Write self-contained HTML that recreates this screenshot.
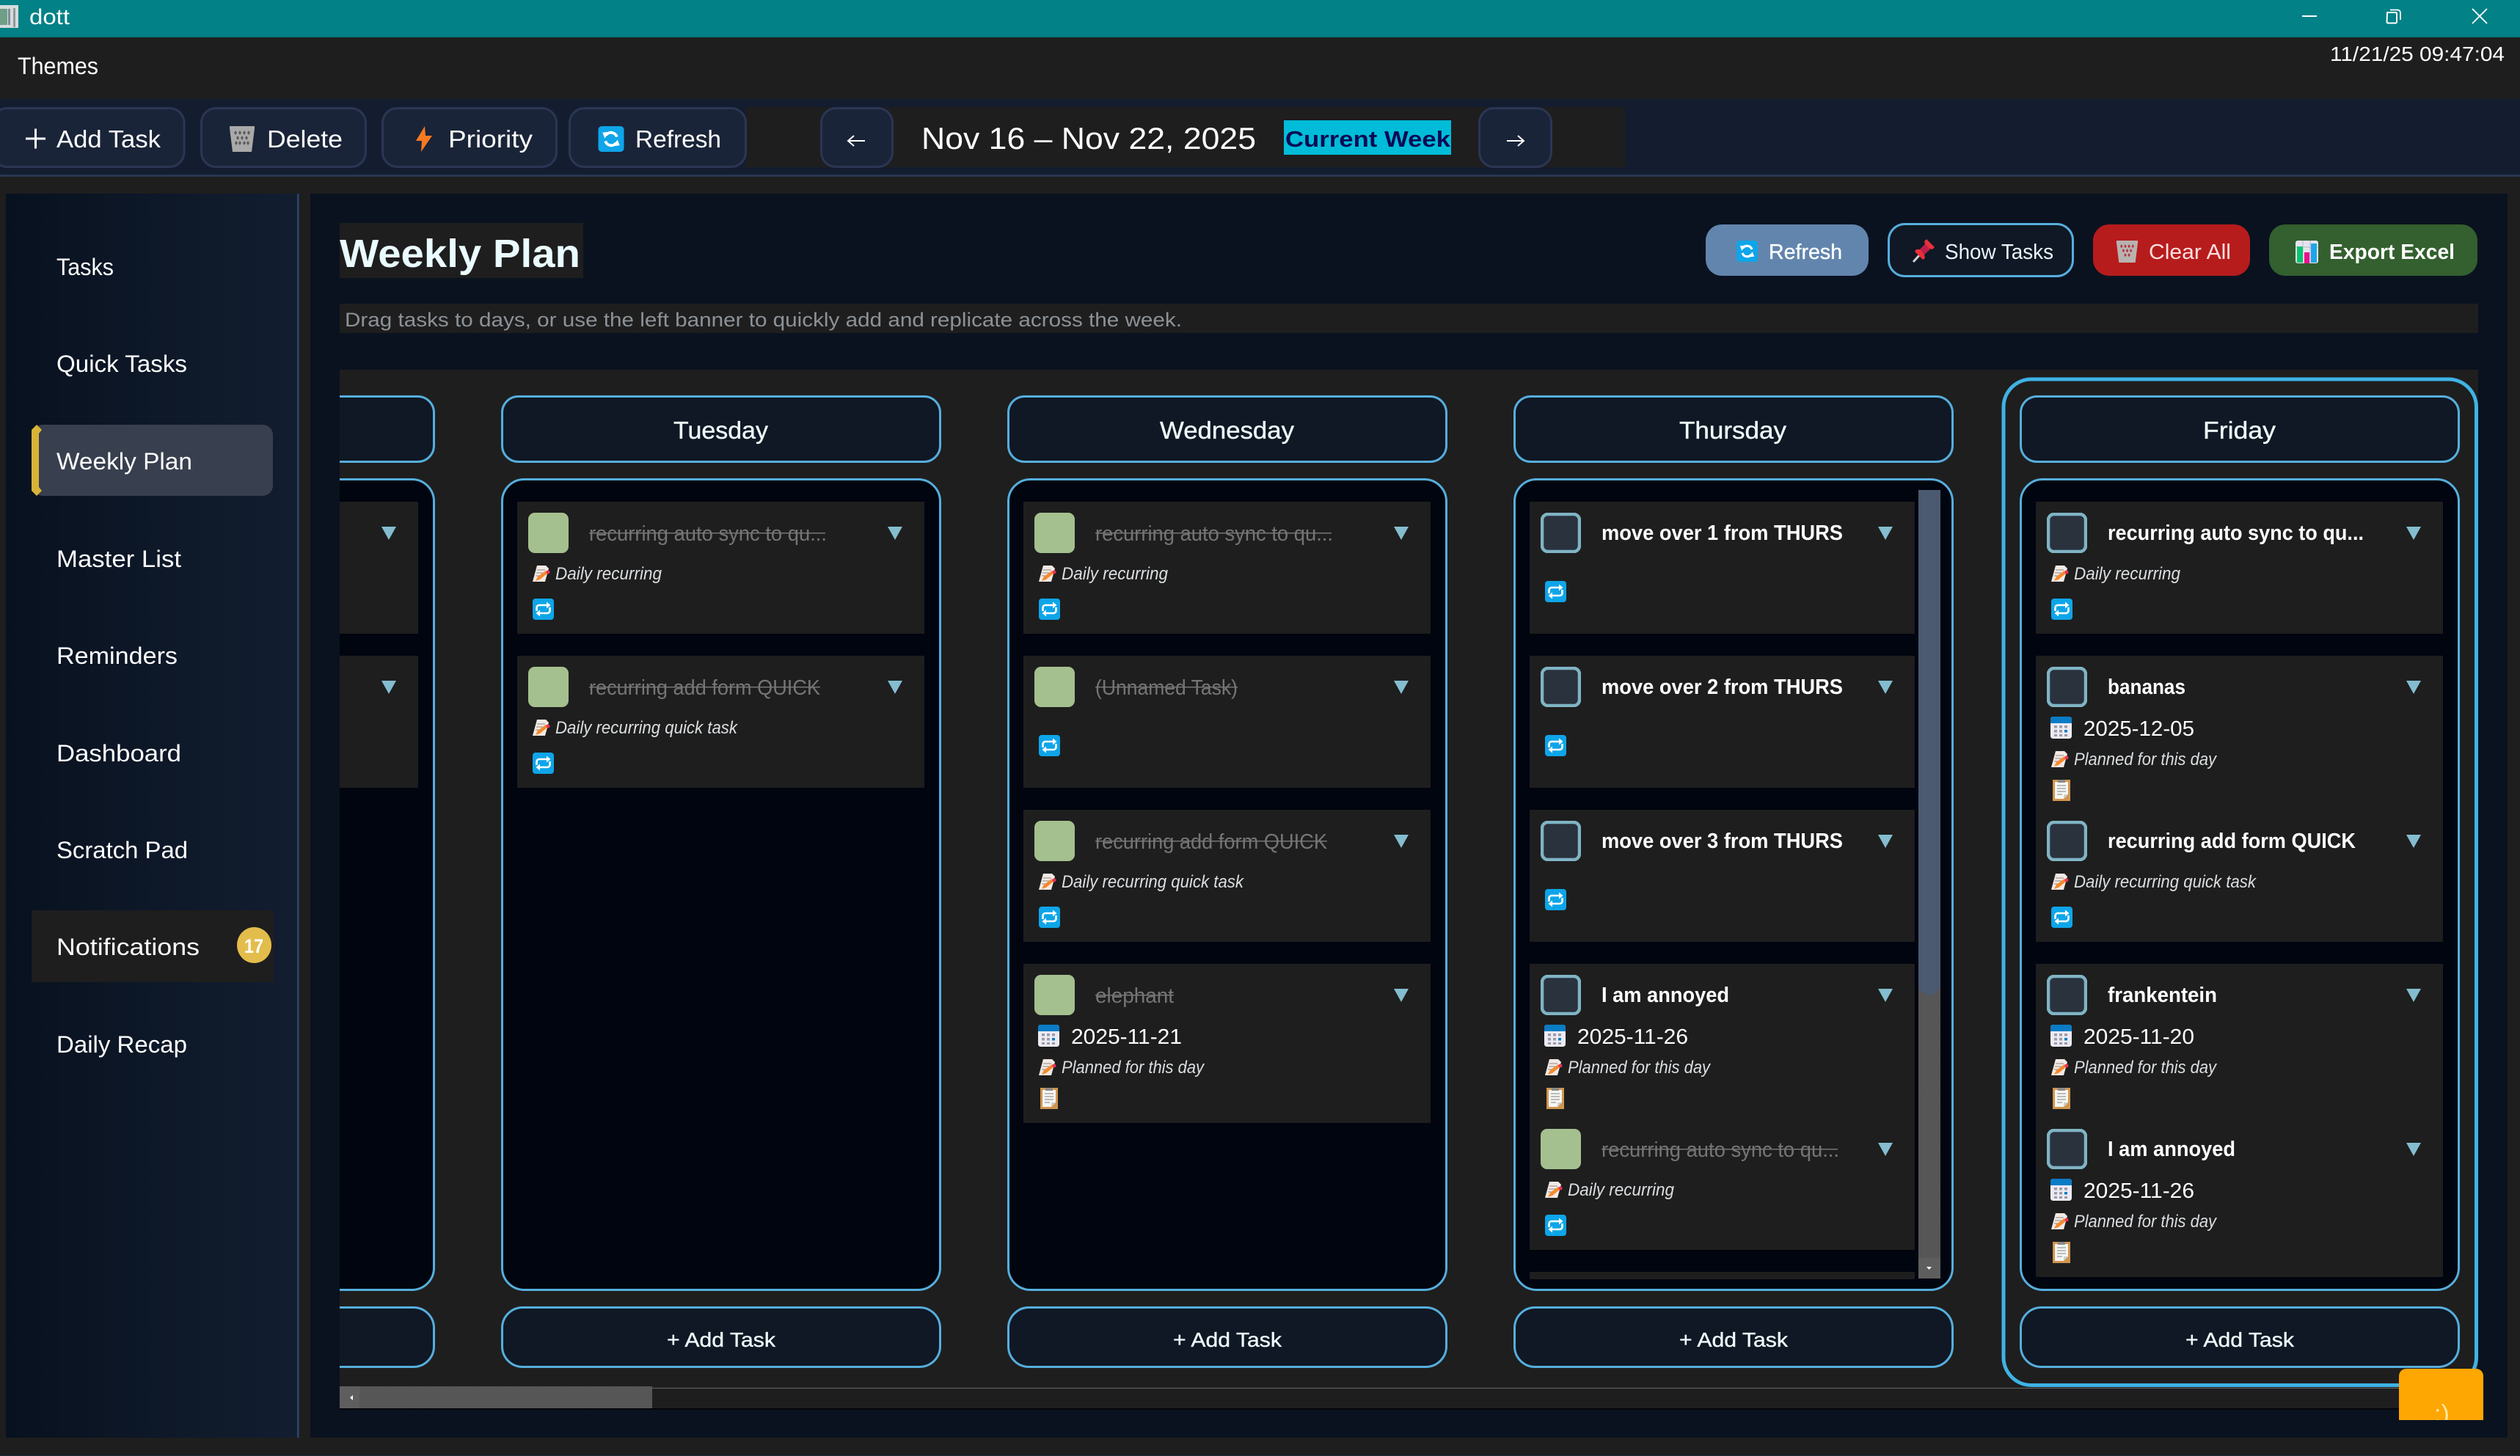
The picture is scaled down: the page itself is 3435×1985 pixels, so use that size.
<!DOCTYPE html>
<html lang="en"><head><meta charset="utf-8"><title>dott</title>
<style>
html,body{margin:0;padding:0;background:#1e1e1e;width:3435px;height:1985px;overflow:hidden}
svg{display:block;font-family:"Liberation Sans",sans-serif}
text{fill:#fff}
.b{font-weight:bold}
.i{font-style:italic;fill:#dcdfe2}
.m{stroke:#fff;stroke-width:.35}
.s{fill:#757575}
</style></head><body>
<svg xmlns="http://www.w3.org/2000/svg" width="3435" height="1985" viewBox="0 0 3435 1985">
<defs>
<linearGradient id="side" x1="0" x2="1" y1="0" y2="0"><stop offset="0" stop-color="#08111f"/><stop offset="1" stop-color="#121e30"/></linearGradient>
<pattern id="dith" width="2" height="2" patternUnits="userSpaceOnUse"><rect width="2" height="2" fill="#303030"/><rect width="1" height="1" fill="#7c7c7c"/><rect x="1" y="1" width="1" height="1" fill="#7c7c7c"/></pattern>
<clipPath id="boardclip"><rect x="463" y="504" width="2915" height="1416"/></clipPath>
<clipPath id="smile"><path d="M3270 1876a10 10 0 0 1 10-10h95a10 10 0 0 1 10 10v60h-115z"/></clipPath>

<symbol id="cd" width="55" height="55" viewBox="0 0 55 55"><rect width="55" height="55" rx="9" fill="#a5c08f"/></symbol>
<symbol id="cu" width="55" height="55" viewBox="0 0 55 55"><rect x="2" y="2" width="51" height="51" rx="8" fill="#2a323e" stroke="#7fb4c4" stroke-width="4.500"/></symbol>
<symbol id="tri" width="20" height="18" viewBox="0 0 20 18"><path d="M0 0H20L10 18z" fill="#84bdcf"/></symbol>
<symbol id="loop" width="29" height="29" viewBox="0 0 29 29"><rect width="29" height="29" rx="4" fill="#0ea5e9"/><path d="M5.500 17V12.500a3.500 3.500 0 0 1 3.500-3.500H20M23.500 12V16.500a3.500 3.500 0 0 1-3.500 3.500H9" fill="none" stroke="#fff" stroke-width="2.600"/><path d="M19 4.500l5.500 4.500-5.500 4.500zM10 15.500l-5.500 4.500 5.500 4.500z" fill="#fff"/></symbol>
<symbol id="note" width="24" height="22" viewBox="0 0 24 22"><path d="M6 0H18L22 4 17 22H0z" fill="#f3e9e4"/><path d="M6 6H17M5 10H14M4 14H10" stroke="#a09a9a" stroke-width="1.300"/><path d="M4 21L7 15 18 7 21 10 10 19z" fill="#f58a2c"/><circle cx="21" cy="9" r="2.500" fill="#e9305c"/></symbol>
<symbol id="cal" width="29" height="30" viewBox="0 0 29 30"><rect width="29" height="30" rx="3.500" fill="#ecebf3"/><path d="M0 9V3.500A3.500 3.500 0 0 1 3.500 0H25.500A3.500 3.500 0 0 1 29 3.500V9z" fill="#0a7cc6"/><g fill="#9d9aa8"><rect x="5" y="12" width="4" height="3.500"/><rect x="12" y="12" width="4" height="3.500"/><rect x="19" y="12" width="4" height="3.500"/><rect x="5" y="18" width="4" height="3.500"/><rect x="12" y="18" width="4" height="3.500"/><rect x="5" y="24" width="4" height="3"/><rect x="12" y="24" width="4" height="3"/><rect x="19" y="24" width="4" height="3"/></g><rect x="19" y="18" width="4" height="3.500" fill="#0a7cc6"/></symbol>
<symbol id="clip" width="24" height="29" viewBox="0 0 24 29"><rect width="24" height="29" y="0" fill="#d09650"/><path d="M3 3H21V20L15 26H3z" fill="#f6f6f4"/><path d="M15 26V20H21z" fill="#cfcfcf"/><rect x="7" y="0" width="10" height="4" fill="#8b8b8b"/><path d="M6 8H18M6 12H18M6 16H18M6 20H13" stroke="#9a9a9a" stroke-width="1.200"/></symbol>
<symbol id="trash" viewBox="0 0 34 35"><path d="M0 0H34V3L30 35H4L0 3z" fill="#a9a9a9"/><g fill="#5a5a5a"><path d="M8 6l2 3-2 3-2-3zM14 6l2 3-2 3-2-3zM20 6l2 3-2 3-2-3zM26 6l2 3-2 3-2-3zM11 13l2 3-2 3-2-3zM17 13l2 3-2 3-2-3zM23 13l2 3-2 3-2-3zM14 20l2 3-2 3-2-3zM20 20l2 3-2 3-2-3zM9 20l2 3-2 3-2-3zM25 20l2 3-2 3-2-3z"/></g></symbol>
<symbol id="trashr" viewBox="0 0 34 35"><path d="M0 0H34V3L30 35H4L0 3z" fill="#b9b2b0"/><g fill="#b4303a"><path d="M8 6l2 3-2 3-2-3zM14 6l2 3-2 3-2-3zM20 6l2 3-2 3-2-3zM26 6l2 3-2 3-2-3zM11 13l2 3-2 3-2-3zM17 13l2 3-2 3-2-3zM23 13l2 3-2 3-2-3zM14 20l2 3-2 3-2-3zM20 20l2 3-2 3-2-3z"/></g></symbol>
<symbol id="bolt" width="22" height="35" viewBox="0 0 22 35"><path d="M12 0L0 20H8L7 35 22 13H13z" fill="#f97a22"/></symbol>
<symbol id="ref" viewBox="0 0 36 36"><rect width="36" height="36" rx="5" fill="#0ea5e9"/><path d="M26 15A8.500 8.500 0 0 0 11 12.500M10 21A8.500 8.500 0 0 0 25 23.500" fill="none" stroke="#fff" stroke-width="4"/><path d="M6 9L16 8 9 17zM30 27L20 28 27 19z" fill="#fff"/></symbol>
<symbol id="pin" width="30" height="32" viewBox="0 0 30 32"><path d="M1 31L11 20" stroke="#cfcfcf" stroke-width="3"/><path d="M19 0L30 11 27 14 23 13 16 21 17 26 14 28 3 17 5 14 10 14 17 7 16 3z" fill="#e8303a"/><path d="M10 14L17 7 24 14 16 21z" fill="#bc1f4a"/></symbol>
<symbol id="chart" width="31" height="31" viewBox="0 0 31 31"><rect width="31" height="31" rx="3" fill="#e4e4ee"/><path d="M10 0V31M20 0V31M0 9H31" stroke="#b9b9c6"/><rect x="2" y="8" width="8" height="22" fill="#08c470"/><rect x="12" y="16" width="7" height="15" fill="#ec0e8c"/><rect x="21" y="4" width="8" height="26" fill="#1ea5e9"/></symbol>
</defs>

<!-- base -->
<rect width="3435" height="1985" fill="#1e1e1e"/>
<rect y="1984" width="3435" height="1" fill="#1c2c3a"/>

<!-- title bar -->
<rect width="3435" height="51" fill="#028186"/>
<rect y="50" width="3435" height="1" fill="#0e6f70"/>
<rect y="7" width="25" height="31" fill="#d6dcdc"/><rect y="12" width="10" height="22" fill="#6f9f86"/><rect x="11" y="12" width="3" height="22" fill="#7d8d99"/><rect x="18" y="11" width="3" height="26" fill="#8f9a9a"/>
<text x="40" y="33" font-size="30" textLength="55" lengthAdjust="spacingAndGlyphs">dott</text>
<rect x="3138" y="21" width="20" height="2" fill="#fff"/>
<path d="M3254 17.500h11.500a1.500 1.500 0 0 1 1.500 1.500v11.500a1.500 1.500 0 0 1-1.500 1.500H3255a1.500 1.500 0 0 1-1.500-1.500z" transform="translate(0,-.5)" fill="none" stroke="#fff" stroke-width="2"/>
<path d="M3258 13.500h10a4 4 0 0 1 4 4V27" fill="none" stroke="#fff" stroke-width="1.800"/>
<path d="M3370 12L3390 32M3390 12L3370 32" stroke="#fff" stroke-width="1.800"/>

<!-- menu bar -->
<text x="24" y="101" font-size="32" textLength="110" lengthAdjust="spacingAndGlyphs">Themes</text>
<text x="3176" y="83" font-size="28" textLength="238" lengthAdjust="spacingAndGlyphs">11/21/25 09:47:04</text>

<!-- toolbar -->
<rect y="135" width="3435" height="104" fill="#141d30"/>
<rect y="238" width="3435" height="3" fill="#2a3650"/>
<rect x="1017" y="146" width="1198" height="82" fill="#1e1e1e"/>
<g fill="#1a2438" stroke="#2b3654" stroke-width="3">
<rect x="-10" y="147.500" width="261" height="80" rx="20"/>
<rect x="274.500" y="147.500" width="224" height="80" rx="20"/>
<rect x="521.500" y="147.500" width="237" height="80" rx="20"/>
<rect x="776.500" y="147.500" width="240" height="80" rx="20"/>
<rect x="1119.500" y="147.500" width="97" height="80" rx="20"/>
<rect x="2016.500" y="147.500" width="98" height="80" rx="20"/>
</g>
<path d="M35 189H62M48.500 175.500V202.500" stroke="#fff" stroke-width="3"/>
<text x="77" y="201" font-size="33" textLength="142" lengthAdjust="spacingAndGlyphs">Add Task</text>
<use href="#trash" x="313" y="172" width="34" height="35"/>
<text x="364" y="201" font-size="33" textLength="103" lengthAdjust="spacingAndGlyphs">Delete</text>
<use href="#bolt" x="567" y="172"/>
<text x="611" y="201" font-size="33" textLength="115" lengthAdjust="spacingAndGlyphs">Priority</text>
<use href="#ref" x="815" y="172" width="36" height="35"/>
<text x="866" y="201" font-size="33" textLength="117" lengthAdjust="spacingAndGlyphs">Refresh</text>
<path d="M1179 192H1156M1164 185L1156 192 1164 199" fill="none" stroke="#fff" stroke-width="2"/>
<text x="1256" y="203" font-size="42" textLength="456" lengthAdjust="spacingAndGlyphs">Nov 16 – Nov 22, 2025</text>
<rect x="1750" y="164" width="228" height="47" fill="#00bcd8"/>
<text x="1752" y="200" font-size="31" class="b" style="fill:#0b0a55" textLength="225" lengthAdjust="spacingAndGlyphs">Current Week</text>
<path d="M2054 192H2077M2069 185L2077 192 2069 199" fill="none" stroke="#fff" stroke-width="2"/>

<!-- sidebar -->
<rect x="8" y="264" width="397" height="1696" fill="url(#side)"/>
<rect x="405" y="264" width="2.500" height="1696" fill="#2d4470"/>
<rect x="44" y="579" width="328" height="97" rx="14" fill="#383f4e"/>
<path d="M50 579L57 586 53 591V664L57 669 50 676 43 669V586z" fill="#d9b338"/>
<rect x="43" y="1241" width="330" height="98" fill="#1e1e1e"/>
<ellipse cx="346.500" cy="1288.500" rx="23.500" ry="24.500" fill="#e3bd4c"/>
<text x="333" y="1299" font-size="27" class="b" textLength="26" lengthAdjust="spacingAndGlyphs">17</text>
<g font-size="32" style="fill:#f4f7fb">
<text x="77" y="375" textLength="78" lengthAdjust="spacingAndGlyphs">Tasks</text>
<text x="77" y="507" textLength="178" lengthAdjust="spacingAndGlyphs">Quick Tasks</text>
<text x="77" y="640" textLength="185" lengthAdjust="spacingAndGlyphs">Weekly Plan</text>
<text x="77" y="773" textLength="170" lengthAdjust="spacingAndGlyphs">Master List</text>
<text x="77" y="905" textLength="165" lengthAdjust="spacingAndGlyphs">Reminders</text>
<text x="77" y="1038" textLength="170" lengthAdjust="spacingAndGlyphs">Dashboard</text>
<text x="77" y="1170" textLength="179" lengthAdjust="spacingAndGlyphs">Scratch Pad</text>
<text x="77" y="1302" textLength="195" lengthAdjust="spacingAndGlyphs">Notifications</text>
<text x="77" y="1435" textLength="178" lengthAdjust="spacingAndGlyphs">Daily Recap</text>
</g>

<!-- main panel -->
<rect x="423" y="264" width="2995" height="1696" fill="#0a1220"/>
<rect x="463" y="304" width="332" height="75" fill="#1e1e1e"/>
<text x="463" y="364" font-size="54" class="b" style="fill:#eafcff" textLength="328" lengthAdjust="spacingAndGlyphs">Weekly Plan</text>
<rect x="463" y="414" width="2915" height="40" fill="#1e1e1e"/>
<text x="470" y="445" font-size="27" style="fill:#8c9298" textLength="1141" lengthAdjust="spacingAndGlyphs">Drag tasks to days, or use the left banner to quickly add and replicate across the week.</text>

<rect x="2325" y="306" width="222" height="70" rx="22" fill="#6285ad"/>
<use href="#ref" x="2366" y="328" width="31" height="29"/>
<text x="2411" y="353" font-size="29" class="m" textLength="100" lengthAdjust="spacingAndGlyphs">Refresh</text>
<rect x="2574.500" y="305.500" width="251" height="71" rx="22" fill="#0f1824" stroke="#56aedd" stroke-width="3"/>
<use href="#pin" x="2607" y="326"/>
<text x="2651" y="353" font-size="29" style="fill:#e8f4fa" textLength="148" lengthAdjust="spacingAndGlyphs">Show Tasks</text>
<rect x="2853" y="306" width="214" height="70" rx="22" fill="#b71c1c"/>
<use href="#trashr" x="2884" y="328" width="31" height="30"/>
<text x="2929" y="353" font-size="29" style="fill:#ffdfdf" textLength="112" lengthAdjust="spacingAndGlyphs">Clear All</text>
<rect x="3093" y="306" width="284" height="70" rx="22" fill="#33602e"/>
<use href="#chart" x="3129" y="328"/>
<text x="3175" y="353" font-size="29" class="b" textLength="171" lengthAdjust="spacingAndGlyphs">Export Excel</text>

<!-- board -->
<rect x="463" y="504" width="2915" height="1416" fill="#1e1e1e"/>
<g clip-path="url(#boardclip)">

<!-- Monday (partially scrolled) -->
<g transform="translate(-7,0)">
<rect x="1.500" y="540.500" width="597" height="89" rx="22" fill="#0f1824" stroke="#56aedd" stroke-width="3"/>
<rect x="1.500" y="653.500" width="597" height="1105" rx="30" fill="#00050f" stroke="#56aedd" stroke-width="3"/>
<rect x="22" y="684" width="555" height="180" fill="#1e1e1e"/><use href="#tri" x="527" y="718"/>
<rect x="22" y="894" width="555" height="180" fill="#1e1e1e"/><use href="#tri" x="527" y="928"/>
<rect x="1.500" y="1782.500" width="597" height="81" rx="28" fill="#0f1824" stroke="#56aedd" stroke-width="3"/>
</g>

<!-- Tuesday -->
<g transform="translate(683,0)">
<rect x="1.500" y="540.500" width="597" height="89" rx="22" fill="#0f1824" stroke="#56aedd" stroke-width="3"/>
<text x="235" y="598" font-size="33" class="m" style="fill:#eafcff" textLength="129" lengthAdjust="spacingAndGlyphs">Tuesday</text>
<rect x="1.500" y="653.500" width="597" height="1105" rx="30" fill="#00050f" stroke="#56aedd" stroke-width="3"/>

<rect x="22" y="684" width="555" height="180" fill="#1e1e1e"/>
<use href="#cd" x="37" y="699"/>
<text x="120" y="737" font-size="29" class="s" textLength="324" lengthAdjust="spacingAndGlyphs">recurring auto sync to qu...</text>
<rect x="120" y="726" width="322" height="1.500" fill="#757575"/>
<use href="#tri" x="527" y="718"/>
<use href="#note" x="43" y="771"/>
<text x="74" y="790" font-size="24" class="i" textLength="145" lengthAdjust="spacingAndGlyphs">Daily recurring</text>
<use href="#loop" x="43" y="816"/>

<rect x="22" y="894" width="555" height="180" fill="#1e1e1e"/>
<use href="#cd" x="37" y="909"/>
<text x="120" y="947" font-size="29" class="s" textLength="315" lengthAdjust="spacingAndGlyphs">recurring add form QUICK</text>
<rect x="120" y="936" width="315" height="1.500" fill="#757575"/>
<use href="#tri" x="527" y="928"/>
<use href="#note" x="43" y="981"/>
<text x="74" y="1000" font-size="24" class="i" textLength="248" lengthAdjust="spacingAndGlyphs">Daily recurring quick task</text>
<use href="#loop" x="43" y="1026"/>

<rect x="1.500" y="1782.500" width="597" height="81" rx="28" fill="#0f1824" stroke="#56aedd" stroke-width="3"/>
<text x="226" y="1836" font-size="28" class="m" style="fill:#eafcff" textLength="148" lengthAdjust="spacingAndGlyphs">+ Add Task</text>
</g>

<!-- Wednesday -->
<g transform="translate(1373,0)">
<rect x="1.500" y="540.500" width="597" height="89" rx="22" fill="#0f1824" stroke="#56aedd" stroke-width="3"/>
<text x="208" y="598" font-size="33" class="m" style="fill:#eafcff" textLength="183" lengthAdjust="spacingAndGlyphs">Wednesday</text>
<rect x="1.500" y="653.500" width="597" height="1105" rx="30" fill="#00050f" stroke="#56aedd" stroke-width="3"/>

<rect x="22" y="684" width="555" height="180" fill="#1e1e1e"/>
<use href="#cd" x="37" y="699"/>
<text x="120" y="737" font-size="29" class="s" textLength="324" lengthAdjust="spacingAndGlyphs">recurring auto sync to qu...</text>
<rect x="120" y="726" width="322" height="1.500" fill="#757575"/>
<use href="#tri" x="527" y="718"/>
<use href="#note" x="43" y="771"/>
<text x="74" y="790" font-size="24" class="i" textLength="145" lengthAdjust="spacingAndGlyphs">Daily recurring</text>
<use href="#loop" x="43" y="816"/>

<rect x="22" y="894" width="555" height="180" fill="#1e1e1e"/>
<use href="#cd" x="37" y="909"/>
<text x="120" y="947" font-size="29" class="s" textLength="194" lengthAdjust="spacingAndGlyphs">(Unnamed Task)</text>
<rect x="120" y="936" width="194" height="1.500" fill="#757575"/>
<use href="#tri" x="527" y="928"/>
<use href="#loop" x="43" y="1002"/>

<rect x="22" y="1104" width="555" height="180" fill="#1e1e1e"/>
<use href="#cd" x="37" y="1119"/>
<text x="120" y="1157" font-size="29" class="s" textLength="316" lengthAdjust="spacingAndGlyphs">recurring add form QUICK</text>
<rect x="120" y="1146" width="316" height="1.500" fill="#757575"/>
<use href="#tri" x="527" y="1138"/>
<use href="#note" x="43" y="1191"/>
<text x="74" y="1210" font-size="24" class="i" textLength="248" lengthAdjust="spacingAndGlyphs">Daily recurring quick task</text>
<use href="#loop" x="43" y="1236"/>

<rect x="22" y="1314" width="555" height="217" fill="#1e1e1e"/>
<use href="#cd" x="37" y="1329"/>
<text x="120" y="1367" font-size="29" class="s" textLength="107" lengthAdjust="spacingAndGlyphs">elephant</text>
<rect x="120" y="1356" width="107" height="1.500" fill="#757575"/>
<use href="#tri" x="527" y="1348"/>
<use href="#cal" x="42" y="1397"/>
<text x="87" y="1423" font-size="29" textLength="151" lengthAdjust="spacingAndGlyphs">2025-11-21</text>
<use href="#note" x="43" y="1444"/>
<text x="74" y="1463" font-size="24" class="i" textLength="194" lengthAdjust="spacingAndGlyphs">Planned for this day</text>
<use href="#clip" x="45" y="1483"/>

<rect x="1.500" y="1782.500" width="597" height="81" rx="28" fill="#0f1824" stroke="#56aedd" stroke-width="3"/>
<text x="226" y="1836" font-size="28" class="m" style="fill:#eafcff" textLength="148" lengthAdjust="spacingAndGlyphs">+ Add Task</text>
</g>

<!-- Thursday -->
<g transform="translate(2063,0)">
<rect x="1.500" y="540.500" width="597" height="89" rx="22" fill="#0f1824" stroke="#56aedd" stroke-width="3"/>
<text x="226" y="598" font-size="33" class="m" style="fill:#eafcff" textLength="146" lengthAdjust="spacingAndGlyphs">Thursday</text>
<rect x="1.500" y="653.500" width="597" height="1105" rx="30" fill="#00050f" stroke="#56aedd" stroke-width="3"/>

<rect x="22" y="684" width="525" height="180" fill="#1e1e1e"/>
<use href="#cu" x="37" y="699"/>
<text x="120" y="736" font-size="29" class="b" textLength="329" lengthAdjust="spacingAndGlyphs">move over 1 from THURS</text>
<use href="#tri" x="497" y="718"/>
<use href="#loop" x="43" y="792"/>

<rect x="22" y="894" width="525" height="180" fill="#1e1e1e"/>
<use href="#cu" x="37" y="909"/>
<text x="120" y="946" font-size="29" class="b" textLength="329" lengthAdjust="spacingAndGlyphs">move over 2 from THURS</text>
<use href="#tri" x="497" y="928"/>
<use href="#loop" x="43" y="1002"/>

<rect x="22" y="1104" width="525" height="180" fill="#1e1e1e"/>
<use href="#cu" x="37" y="1119"/>
<text x="120" y="1156" font-size="29" class="b" textLength="329" lengthAdjust="spacingAndGlyphs">move over 3 from THURS</text>
<use href="#tri" x="497" y="1138"/>
<use href="#loop" x="43" y="1212"/>

<rect x="22" y="1314" width="525" height="217" fill="#1e1e1e"/>
<use href="#cu" x="37" y="1329"/>
<text x="120" y="1366" font-size="29" class="b" textLength="174" lengthAdjust="spacingAndGlyphs">I am annoyed</text>
<use href="#tri" x="497" y="1348"/>
<use href="#cal" x="42" y="1397"/>
<text x="87" y="1423" font-size="29" textLength="151" lengthAdjust="spacingAndGlyphs">2025-11-26</text>
<use href="#note" x="43" y="1444"/>
<text x="74" y="1463" font-size="24" class="i" textLength="194" lengthAdjust="spacingAndGlyphs">Planned for this day</text>
<use href="#clip" x="45" y="1483"/>

<rect x="22" y="1524" width="525" height="180" fill="#1e1e1e"/>
<use href="#cd" x="37" y="1539"/>
<text x="120" y="1577" font-size="29" class="s" textLength="324" lengthAdjust="spacingAndGlyphs">recurring auto sync to qu...</text>
<rect x="120" y="1566" width="322" height="1.500" fill="#757575"/>
<use href="#tri" x="497" y="1558"/>
<use href="#note" x="43" y="1611"/>
<text x="74" y="1630" font-size="24" class="i" textLength="145" lengthAdjust="spacingAndGlyphs">Daily recurring</text>
<use href="#loop" x="43" y="1656"/>

<rect x="22" y="1734" width="525" height="10" fill="#1e1e1e"/>

<rect x="552" y="668" width="30" height="1075" fill="url(#dith)"/>
<rect x="552" y="1715" width="30" height="28" fill="#5e5e5e"/>
<path d="M563 1727h7l-3.500 4z" fill="#fff"/>
<path d="M552 668H582V1341A15 15 0 0 1 552 1341z" fill="#4b5a70"/>

<rect x="1.500" y="1782.500" width="597" height="81" rx="28" fill="#0f1824" stroke="#56aedd" stroke-width="3"/>
<text x="226" y="1836" font-size="28" class="m" style="fill:#eafcff" textLength="148" lengthAdjust="spacingAndGlyphs">+ Add Task</text>
</g>

<!-- Friday -->
<rect x="2731" y="517" width="644.500" height="1371.500" rx="38" fill="none" stroke="#3fb2e6" stroke-width="5"/>
<g transform="translate(2753,0)">
<rect x="1.500" y="540.500" width="597" height="89" rx="22" fill="#0f1824" stroke="#56aedd" stroke-width="3"/>
<text x="250" y="598" font-size="33" class="m" style="fill:#eafcff" textLength="99" lengthAdjust="spacingAndGlyphs">Friday</text>
<rect x="1.500" y="653.500" width="597" height="1105" rx="30" fill="#00050f" stroke="#56aedd" stroke-width="3"/>

<rect x="22" y="684" width="555" height="180" fill="#1e1e1e"/>
<use href="#cu" x="37" y="699"/>
<text x="120" y="736" font-size="29" class="b" textLength="349" lengthAdjust="spacingAndGlyphs">recurring auto sync to qu...</text>
<use href="#tri" x="527" y="718"/>
<use href="#note" x="43" y="771"/>
<text x="74" y="790" font-size="24" class="i" textLength="145" lengthAdjust="spacingAndGlyphs">Daily recurring</text>
<use href="#loop" x="43" y="816"/>

<rect x="22" y="894" width="555" height="217" fill="#1e1e1e"/>
<use href="#cu" x="37" y="909"/>
<text x="120" y="946" font-size="29" class="b" textLength="106" lengthAdjust="spacingAndGlyphs">bananas</text>
<use href="#tri" x="527" y="928"/>
<use href="#cal" x="42" y="977"/>
<text x="87" y="1003" font-size="29" textLength="151" lengthAdjust="spacingAndGlyphs">2025-12-05</text>
<use href="#note" x="43" y="1024"/>
<text x="74" y="1043" font-size="24" class="i" textLength="194" lengthAdjust="spacingAndGlyphs">Planned for this day</text>
<use href="#clip" x="45" y="1063"/>

<rect x="22" y="1104" width="555" height="180" fill="#1e1e1e"/>
<use href="#cu" x="37" y="1119"/>
<text x="120" y="1156" font-size="29" class="b" textLength="338" lengthAdjust="spacingAndGlyphs">recurring add form QUICK</text>
<use href="#tri" x="527" y="1138"/>
<use href="#note" x="43" y="1191"/>
<text x="74" y="1210" font-size="24" class="i" textLength="248" lengthAdjust="spacingAndGlyphs">Daily recurring quick task</text>
<use href="#loop" x="43" y="1236"/>

<rect x="22" y="1314" width="555" height="217" fill="#1e1e1e"/>
<use href="#cu" x="37" y="1329"/>
<text x="120" y="1366" font-size="29" class="b" textLength="149" lengthAdjust="spacingAndGlyphs">frankentein</text>
<use href="#tri" x="527" y="1348"/>
<use href="#cal" x="42" y="1397"/>
<text x="87" y="1423" font-size="29" textLength="151" lengthAdjust="spacingAndGlyphs">2025-11-20</text>
<use href="#note" x="43" y="1444"/>
<text x="74" y="1463" font-size="24" class="i" textLength="194" lengthAdjust="spacingAndGlyphs">Planned for this day</text>
<use href="#clip" x="45" y="1483"/>

<rect x="22" y="1524" width="555" height="217" fill="#1e1e1e"/>
<use href="#cu" x="37" y="1539"/>
<text x="120" y="1576" font-size="29" class="b" textLength="174" lengthAdjust="spacingAndGlyphs">I am annoyed</text>
<use href="#tri" x="527" y="1558"/>
<use href="#cal" x="42" y="1607"/>
<text x="87" y="1633" font-size="29" textLength="151" lengthAdjust="spacingAndGlyphs">2025-11-26</text>
<use href="#note" x="43" y="1654"/>
<text x="74" y="1673" font-size="24" class="i" textLength="194" lengthAdjust="spacingAndGlyphs">Planned for this day</text>
<use href="#clip" x="45" y="1693"/>

<rect x="1.500" y="1782.500" width="597" height="81" rx="28" fill="#0f1824" stroke="#56aedd" stroke-width="3"/>
<text x="226" y="1836" font-size="28" class="m" style="fill:#eafcff" textLength="148" lengthAdjust="spacingAndGlyphs">+ Add Task</text>
</g>
</g>

<!-- horizontal scrollbar -->
<rect x="463" y="1892" width="2915" height="1" fill="#6a6a6a"/>
<rect x="463" y="1890" width="426" height="30" fill="url(#dith)"/>
<rect x="463" y="1890" width="27" height="30" fill="#5e5e5e"/>
<path d="M481 1902v7l-4-3.500z" fill="#fff"/>
<rect x="463" y="1920" width="2915" height="1.500" fill="#000"/>

<!-- floating orange tab -->
<path d="M3270 1876a10 10 0 0 1 10-10h95a10 10 0 0 1 10 10v60h-115z" fill="#fea602"/>
<text x="3318" y="1939" font-size="34" clip-path="url(#smile)" style="fill:#ffe9a0">:)</text>
</svg>
</body></html>
